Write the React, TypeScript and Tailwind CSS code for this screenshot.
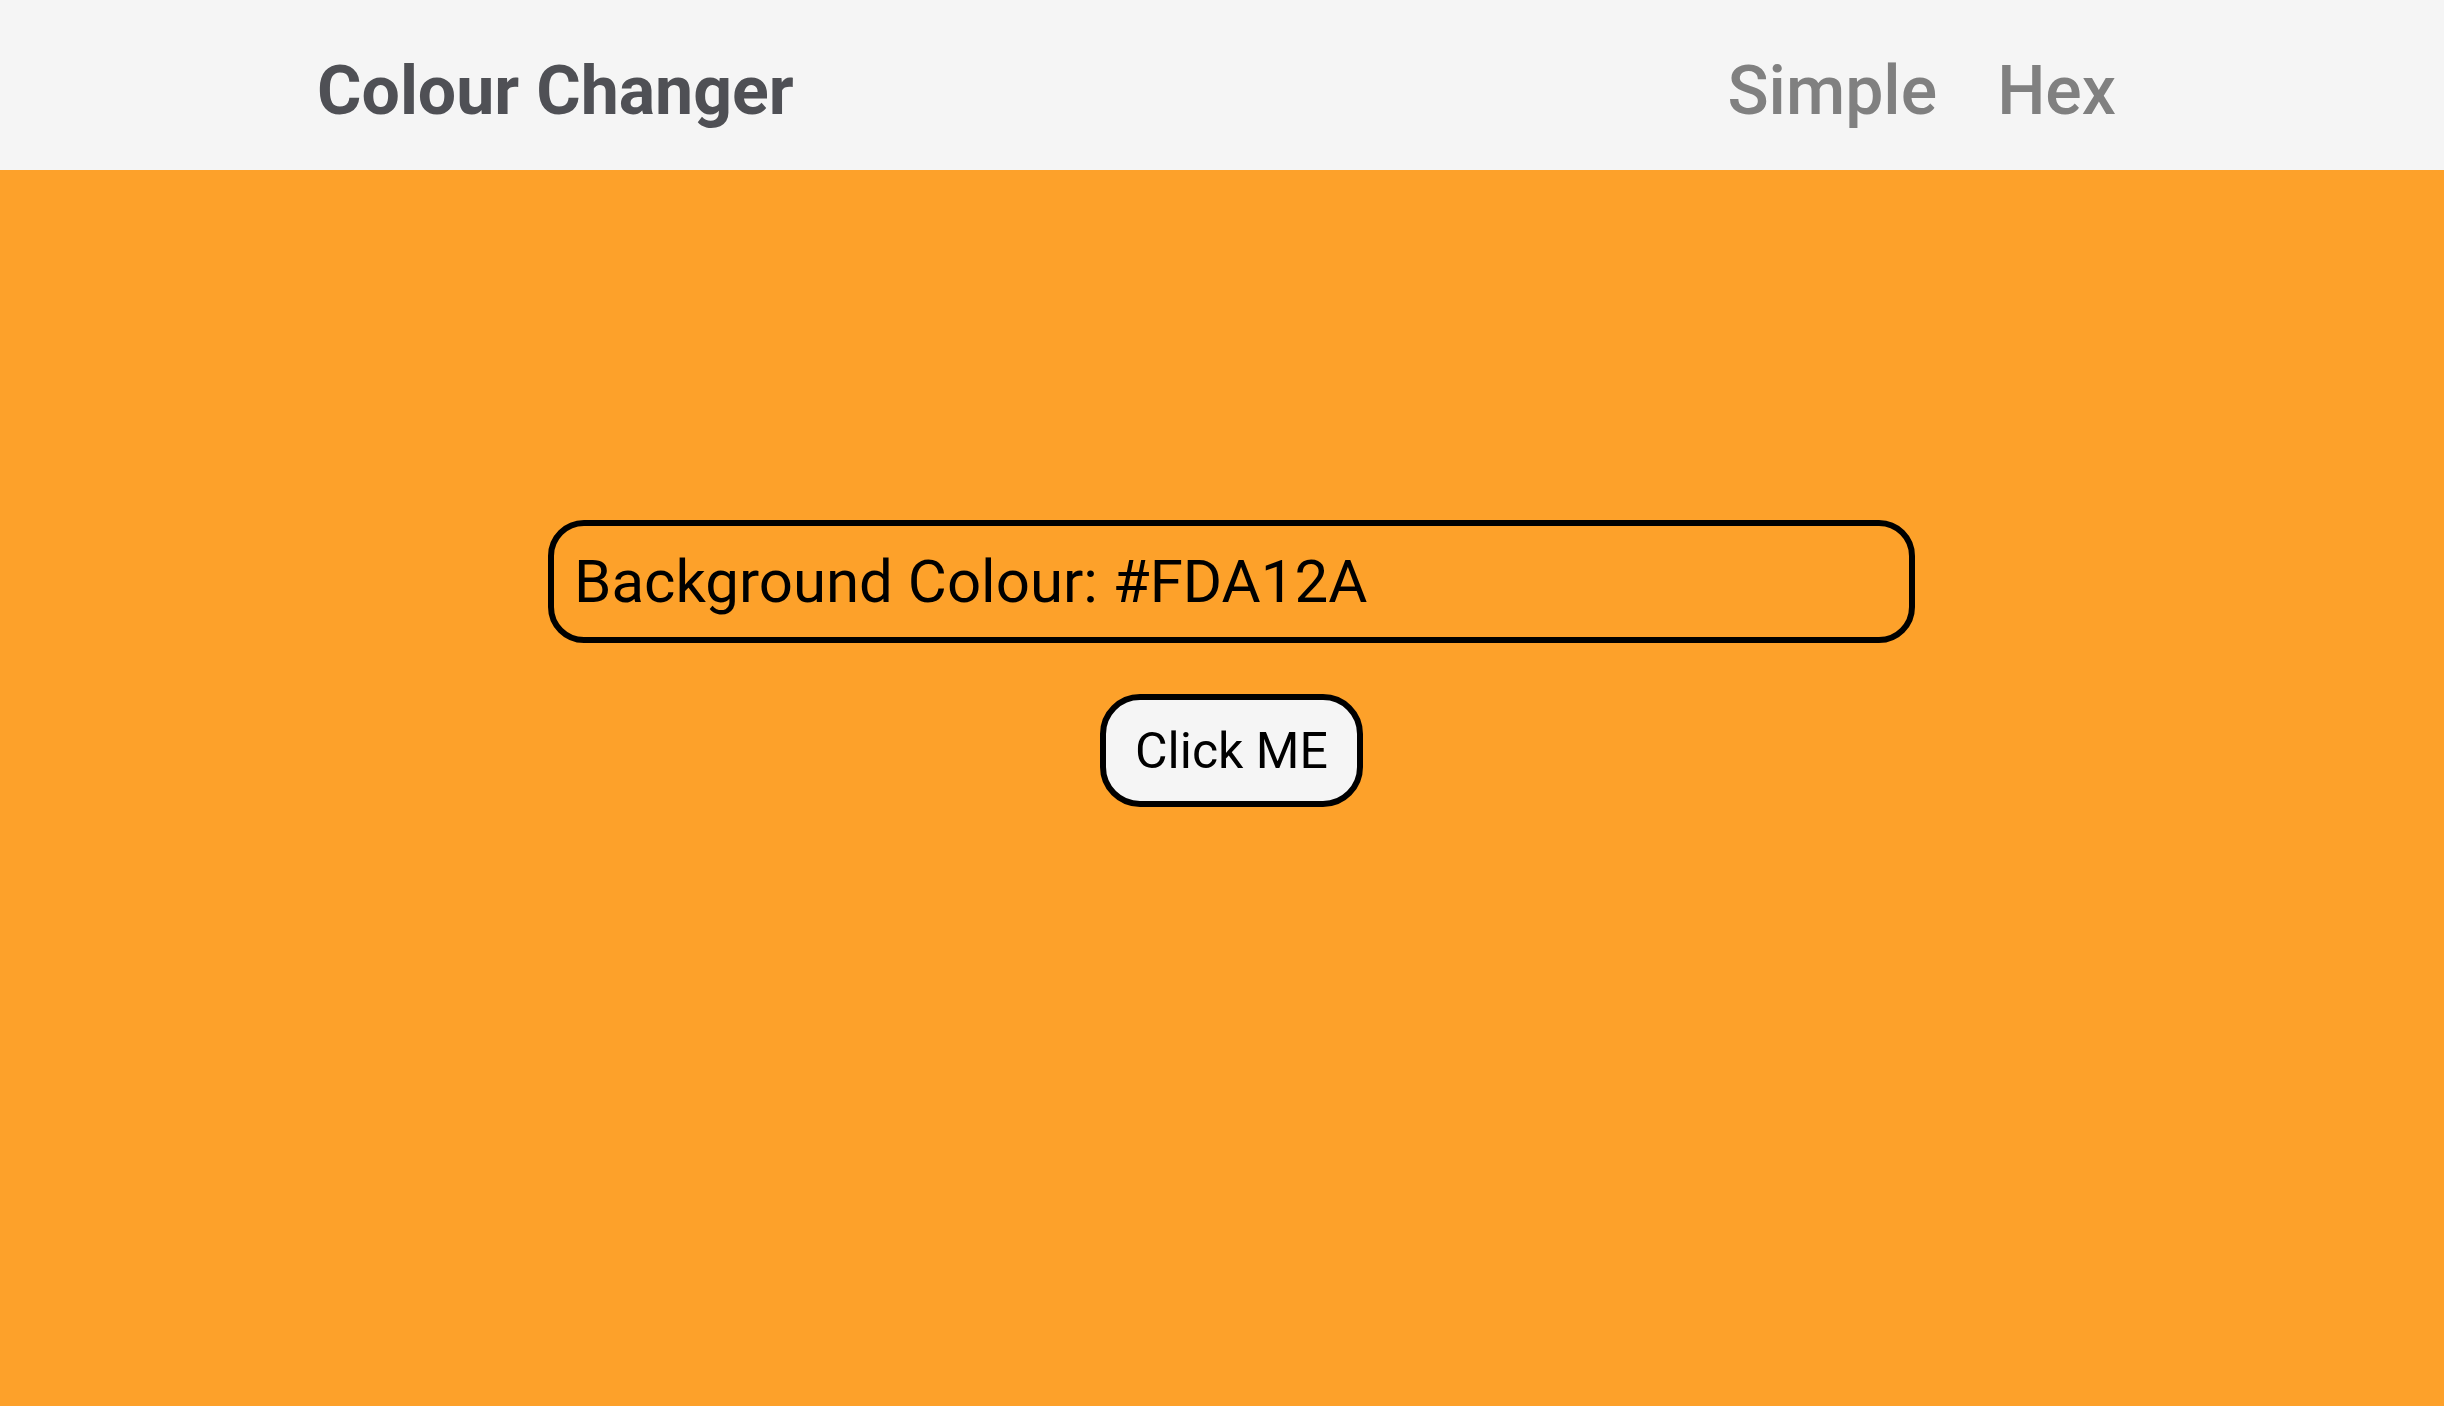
export default function App() {
  return (
    <div className="min-h-screen w-full bg-[#FDA12A] font-['Roboto',sans-serif]">
      {/* Navbar */}
      <nav className="h-[170px] bg-[#f5f5f5] flex items-center justify-between pt-[12px] pl-[317px] pr-[328px]">
        <div className="text-[68px] font-bold text-[#4f5055] leading-none">Colour Changer</div>
        <div className="flex items-center gap-[60px] text-[68px] font-medium text-[#808080] leading-none">
          <a href="#simple">Simple</a>
          <a href="#hex">Hex</a>
        </div>
      </nav>

      {/* Content */}
      <div className="flex flex-col items-center pt-[350px] pl-[19px]">
        <div className="w-[1367px] h-[123px] border-[6px] border-black rounded-[36px] flex items-center px-[20px]">
          <span className="text-[60px] text-black leading-none">Background Colour: #FDA12A</span>
        </div>
        <button className="mt-[51px] w-[263px] h-[113px] bg-[#f5f5f5] border-[6px] border-black rounded-[40px] text-[50px] text-black leading-none">
          Click ME
        </button>
      </div>
    </div>
  )
}
